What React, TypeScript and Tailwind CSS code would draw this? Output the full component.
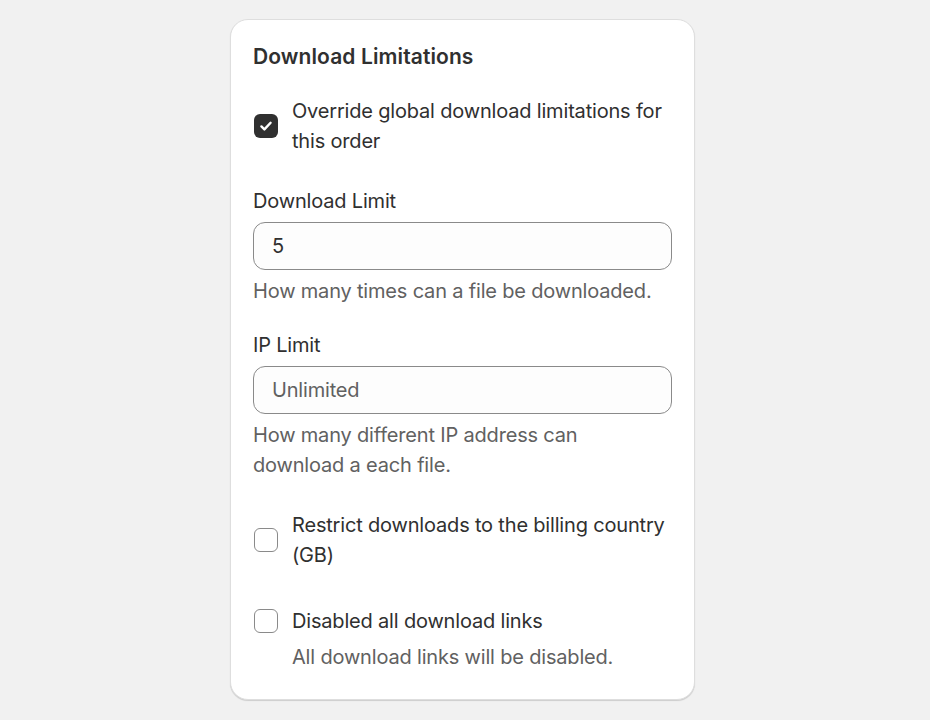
import React from "react";

function Box({ checked }: { checked?: boolean }) {
  return checked ? (
    <div className="w-[24px] h-[24px] shrink-0 rounded-[6px] bg-[#303030] flex items-center justify-center">
      <svg width="16" height="16" viewBox="0 0 16 16" fill="none">
        <path d="M3.4 8.4l3 3L12.6 4.8" stroke="#fff" strokeWidth="2.4" strokeLinecap="round" strokeLinejoin="round" />
      </svg>
    </div>
  ) : (
    <div className="w-[24px] h-[24px] shrink-0 rounded-[6px] border border-[#8a8a8a] bg-white" />
  );
}

export default function App() {
  return (
    <div
      className="min-h-screen bg-[#f1f1f1] pt-[19px] pb-[19px] text-[#303030]"
      style={{ fontFamily: "Inter, 'Noto Sans', sans-serif" }}
    >
      <div className="ml-[230px] w-[465px] rounded-[18px] bg-white border border-[#dedede] shadow-[0_1px_1px_rgba(0,0,0,0.15)] px-[22px] pt-[22px] pb-[27px] text-[20px] leading-[30px] tracking-[-0.18px]">
        <h2 className="font-semibold text-[21px] leading-[30px] tracking-[0.1px]">Download Limitations</h2>

        <div className="mt-[24px] flex items-center gap-[14px]">
          <div className="pl-[1px]"><Box checked /></div>
          <div>Override global download limitations for this order</div>
        </div>

        <div className="mt-[30px]">Download Limit</div>
        <div className="mt-[6px] h-[48px] rounded-[12px] border border-[#8a8a8a] bg-[#fdfdfd] flex items-center px-[18px]">
          5
        </div>
        <div className="mt-[6px] text-[#616161]">How many times can a file be downloaded.</div>

        <div className="mt-[24px]">IP Limit</div>
        <div className="mt-[6px] h-[48px] rounded-[12px] border border-[#8a8a8a] bg-[#fdfdfd] flex items-center px-[18px] text-[#616161]">
          Unlimited
        </div>
        <div className="mt-[6px] text-[#616161]">How many different IP address can download a each file.</div>

        <div className="mt-[30px] flex items-center gap-[14px]">
          <div className="pl-[1px]"><Box /></div>
          <div>Restrict downloads to the billing country (GB)</div>
        </div>

        <div className="mt-[36px] flex items-center gap-[14px]">
          <div className="pl-[1px]"><Box /></div>
          <div>Disabled all download links</div>
        </div>
        <div className="mt-[6px] pl-[39px] text-[#616161]">All download links will be disabled.</div>
      </div>
    </div>
  );
}
